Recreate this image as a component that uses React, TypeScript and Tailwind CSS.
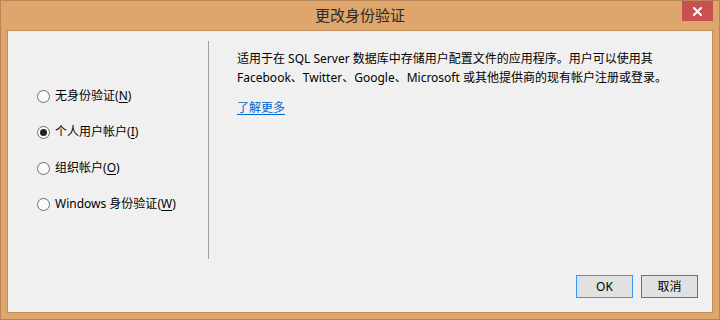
import React from "react";

const font = { fontFamily: '"Noto Sans", "Noto Sans CJK SC", sans-serif' };

function Radio({ checked, label, mn, rest }: { checked?: boolean; label: string; mn: string; rest?: string }) {
  return (
    <div className="flex items-center h-[16px]">
      <span className="w-[13px] h-[13px] rounded-full border border-[#6f6f6f] bg-[#fafafa] flex items-center justify-center shrink-0">
        {checked && <span className="w-[7px] h-[7px] rounded-full bg-[#222]" />}
      </span>
      <span className="ml-[5px] text-[12px] text-black leading-[16px] whitespace-nowrap">
        {label}(<span className="underline underline-offset-2">{mn}</span>){rest}
      </span>
    </div>
  );
}

export default function App() {
  return (
    <div
      className="w-[720px] h-[320px] bg-[#dea66c] border border-[#b88556] flex flex-col px-[6px] pb-[6px] overflow-hidden"
      style={font}
    >
      <div className="relative h-[29px] flex items-center justify-center shrink-0">
        <span className="text-[15px] text-[#2a2a2a] leading-none pb-[1px]">更改身份验证</span>
        <div className="absolute right-[0px] top-0 w-[31px] h-[20px] bg-[#c75050] flex items-center justify-center">
          <svg width="9" height="9" viewBox="0 0 9 9">
            <path d="M1 1L8 8M8 1L1 8" stroke="white" strokeWidth="2" strokeLinecap="square" />
          </svg>
        </div>
      </div>
      <div className="flex-1 bg-[#f0f0f0] border border-[#c08d5c] flex flex-col">
        <div className="flex mt-[10px] h-[218px]">
          <div className="w-[200px] pl-[29px] pt-[47px] flex flex-col gap-[20px]">
            <Radio label="无身份验证" mn="N" />
            <Radio checked label="个人用户帐户" mn="I" />
            <Radio label="组织帐户" mn="O" />
            <Radio label="Windows 身份验证" mn="W" />
          </div>
          <div className="w-px bg-[#a0a0a0]" />
          <div className="flex-1 pl-[28px] pr-[20px] pt-[9px] text-[12px] text-black">
            <p className="leading-[18.5px]">
              适用于在 SQL Server 数据库中存储用户配置文件的应用程序。用户可以使用其
              <br />
              Facebook、Twitter、Google、Microsoft 或其他提供商的现有帐户注册或登录。
            </p>
            <a className="block mt-[12px] leading-[18px] text-[#0066cc] underline underline-offset-2 w-fit">了解更多</a>
          </div>
        </div>
        <div className="flex-1 flex items-end justify-end gap-[8px] pr-[14px] pb-[14px]">
          <button className="w-[57px] h-[23px] border border-[#3399ff] bg-[#e1e1e1] text-[12px] text-black">OK</button>
          <button className="w-[57px] h-[23px] border border-[#707070] bg-[#e1e1e1] text-[12px] text-black">取消</button>
        </div>
      </div>
    </div>
  );
}
